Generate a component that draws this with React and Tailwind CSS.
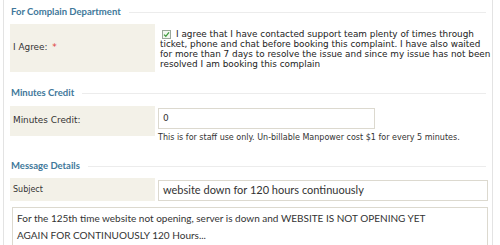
import React from 'react';

const Heading = ({ children, className = '' }) => (
  <div className={`flex items-center h-[16px] ${className}`}>
    <span className="font-['Lato',sans-serif] font-bold text-[9.5px] text-[#41789a] pl-[1px] pr-[8px] whitespace-nowrap">
      {children}
    </span>
    <div className="flex-1 h-px bg-[#ececec] mr-[4px]" />
  </div>
);

const LabelCell = ({ children, className = '' }) => (
  <div className={`w-[145px] shrink-0 bg-[#f3f1e8] flex items-center pl-[3px] font-['DejaVu_Sans',sans-serif] text-[#333] ${className}`}>
    {children}
  </div>
);

const Checkbox = () => (
  <span className="inline-flex align-[-1px] w-[9px] h-[9px] border border-[#9aa89a] bg-[#f1f7ef] items-center justify-center mr-[5px] ml-[2px]">
    <svg width="7" height="7" viewBox="0 0 7 7">
      <path d="M1 3.6 L2.8 5.3 L6 1.4" fill="none" stroke="#3d9a3d" strokeWidth="1.3" />
    </svg>
  </span>
);

const agreeLines = [
  'ticket, phone and chat before booking this complaint. I have also waited',
  'for more than 7 days to resolve the issue and since my issue has not been',
  'resolved I am booking this complain',
];

export default function App() {
  return (
    <div className="w-[500px] h-[245px] bg-white overflow-hidden">
      <div className="ml-[3px] w-[490px] h-full border-x border-[#e3e3e3] pl-[6px] pr-[2px] pt-[4px]">
        <Heading>For Complain Department</Heading>

        <div className="flex mt-[4px] h-[48px]">
          <LabelCell className="text-[8.9px]">
            I Agree:&nbsp; <span className="text-[#e03c3c] ml-[2px]">*</span>
          </LabelCell>
          <div className="pl-[5px] pt-[5px] whitespace-nowrap font-['DejaVu_Sans',sans-serif] text-[8.85px] leading-[10px] text-[#222]">
            <div>
              <Checkbox />
              I agree that I have contacted support team plenty of times through
            </div>
            {agreeLines.map((l) => (
              <div key={l}>{l}</div>
            ))}
          </div>
        </div>

        <Heading className="mt-[13px]">Minutes Credit</Heading>

        <div className="flex items-start mt-[5px]">
          <LabelCell className="h-[30px] text-[8.9px]">Minutes Credit:</LabelCell>
          <div className="pl-[3px] pt-[2px]">
            <div className="w-[217px] h-[21px] border border-[#dcd9cf] bg-white flex items-center pl-[4px] font-['DejaVu_Sans',sans-serif] text-[9px] text-[#333]">
              0
            </div>
            <div className="mt-[3px] font-['DejaVu_Sans',sans-serif] text-[8px] text-[#333] whitespace-nowrap">
              This is for staff use only. Un-billable Manpower cost $1 for every 5 minutes.
            </div>
          </div>
        </div>

        <Heading className="mt-[14px]">Message Details</Heading>

        <div className="flex mt-[4px] h-[23px]">
          <LabelCell className="text-[8px]">Subject</LabelCell>
          <div className="pl-[3px] pt-[2px] flex-1 pr-[2px]">
            <div className="h-[21px] border border-[#dcd9cf] bg-white flex items-center pl-[4px] font-['Lato',sans-serif] text-[11px] text-[#333]">
              website down for 120 hours continuously
            </div>
          </div>
        </div>

        <div className="mt-[6px] ml-[2px] mr-[2px] h-[60px] border border-[#dcd9cf] bg-white pl-[4px] pt-[2px] font-['Lato',sans-serif] text-[10px] leading-[17px] text-[#333]">
          For the 125th time website not opening, server is down and WEBSITE IS NOT OPENING YET
          <br />
          AGAIN FOR CONTINUOUSLY 120 Hours...
        </div>
      </div>
    </div>
  );
}
